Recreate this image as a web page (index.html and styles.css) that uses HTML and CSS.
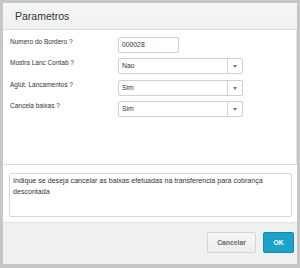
FILE: index.html
```html
<!DOCTYPE html>
<html lang="pt">
<head>
    <meta charset="utf-8">
    <link rel="stylesheet" href="styles.css">
    <title>Parametros</title>
</head>
<body>
    <div class="dialog">
        <div class="dialog-header">Parametros</div>
        <div class="dialog-body">
            <div class="form-row">
                <div class="form-label">Numero do Bordero ?</div>
                <div class="text-field">000028</div>
            </div>
            <div class="form-row">
                <div class="form-label">Mostra Lanc Contab ?</div>
                <div class="select-field">
                    <span class="select-value">Nao</span>
                    <span class="select-arrow"></span>
                </div>
            </div>
            <div class="form-row">
                <div class="form-label">Aglut. Lancamentos ?</div>
                <div class="select-field">
                    <span class="select-value">Sim</span>
                    <span class="select-arrow"></span>
                </div>
            </div>
            <div class="form-row">
                <div class="form-label">Cancela baixas ?</div>
                <div class="select-field">
                    <span class="select-value">Sim</span>
                    <span class="select-arrow"></span>
                </div>
            </div>
        </div>
        <div class="dialog-help">
            <div class="help-box">Indique se deseja cancelar as baixas efetuadas na transferencia para cobrança descontada</div>
        </div>
        <div class="dialog-footer">
            <button class="btn btn-cancel">Cancelar</button>
            <button class="btn btn-ok">OK</button>
        </div>
    </div>
</body>
</html>
```

FILE: styles.css
```css
html, body {
    margin: 0;
    padding: 0;
}
body {
    background-color: #c6c6c6;
    font-family: "Liberation Sans", Arial, sans-serif;
    color: #333;
    width: 300px;
    height: 268px;
    overflow: hidden;
}

.dialog {
    margin: 3px 3px 0 3px;
    height: 261px;
    display: flex;
    flex-direction: column;
    background: #fff;
}

.dialog-header {
    height: 26px;
    line-height: 26px;
    padding-left: 12px;
    font-size: 10.5px;
    color: #333;
    background: linear-gradient(#f5f6f6, #eff0f1);
    border-bottom: 1px solid #dcdcdc;
}

.dialog-body {
    height: 127px;
    padding: 7px 0 0 7px;
    display: flex;
    flex-direction: column;
    gap: 5.4px;
    border-right: 1px solid #e4e4e4;
}

.form-row {
    display: flex;
    align-items: flex-start;
    height: 16px;
}

.form-label {
    width: 108px;
    font-size: 6.5px;
    line-height: 9px;
    color: #333;
}

.text-field,
.select-field {
    box-sizing: border-box;
    height: 16px;
    border: 1px solid #cfcfcf;
    border-radius: 2px;
    font-size: 6.8px;
    line-height: 14px;
    color: #333;
    background: #fff;
}

.text-field {
    width: 61px;
    padding-left: 3px;
}

.select-field {
    width: 125px;
    display: flex;
}
.select-value {
    flex: 1;
    padding-left: 3px;
    border-right: 1px solid #d6d6d6;
}
.select-arrow {
    width: 14px;
    position: relative;
}
.select-arrow::after {
    content: "";
    position: absolute;
    left: 5px;
    top: 6px;
    border-left: 2.5px solid transparent;
    border-right: 2.5px solid transparent;
    border-top: 3px solid #777;
}

.dialog-help {
    border-top: 1px solid #d8d8d8;
    padding: 8px 5px 5px 6px;
    height: 44px;
}
.help-box {
    box-sizing: border-box;
    height: 44px;
    border: 1px solid #d8d8d8;
    border-radius: 2px;
    padding: 2px 3px;
    font-size: 7.1px;
    line-height: 11px;
    color: #333;
}

.dialog-footer {
    flex: 1;
    background: #eff0f1;
    border-top: 1px solid #e2e2e2;
    display: flex;
    justify-content: flex-end;
    align-items: flex-start;
    padding: 9px 3px 0 0;
    gap: 7px;
}

.btn {
    box-sizing: border-box;
    height: 21px;
    border-radius: 2px;
    font-family: "Liberation Sans", Arial, sans-serif;
    font-size: 6.8px;
    font-weight: bold;
    padding: 0;
    cursor: pointer;
}
.btn-cancel {
    width: 49px;
    background: linear-gradient(#f7f7f7, #ececec);
    border: 1px solid #d4d4d4;
    color: #6a6a6a;
}
.btn-ok {
    width: 31px;
    background: #1ea1c9;
    border: 1px solid #1689ad;
    color: #fff;
}
```
